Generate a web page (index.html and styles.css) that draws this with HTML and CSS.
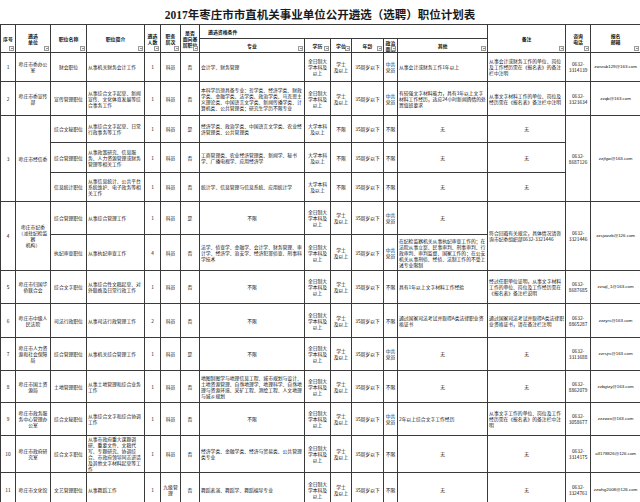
FILE: index.html
```html
<!DOCTYPE html>
<html lang="zh-CN">
<head>
<meta charset="utf-8">
<title>2017年枣庄市市直机关事业单位公开遴选（选聘）职位计划表</title>
<link rel="stylesheet" href="styles.css">
</head>
<body>
<div class="page">
  <div class="title">2017年枣庄市市直机关事业单位公开遴选（选聘）职位计划表</div>
  <table class="plan">
    <colgroup>
      <col style="width:15px"><col style="width:35px"><col style="width:36px"><col style="width:58px">
      <col style="width:16px"><col style="width:20px"><col style="width:19px"><col style="width:105px">
      <col style="width:26px"><col style="width:21px"><col style="width:32px"><col style="width:14px">
      <col style="width:90px"><col style="width:78px"><col style="width:25px"><col style="width:50px">
    </colgroup>
    <thead>
      <tr class="hr1">
        <th rowspan="2">序号<span class="flt"></span></th>
        <th rowspan="2">遴选<br>单位<span class="flt"></span></th>
        <th rowspan="2">职位名称<span class="flt"></span></th>
        <th rowspan="2">职位简介<span class="flt"></span></th>
        <th rowspan="2">遴选<br>人数<span class="flt"></span></th>
        <th rowspan="2">职务<br>层次<span class="flt"></span></th>
        <th rowspan="2">是否<br>面向基<br>层职位<span class="flt"></span></th>
        <th colspan="6" class="lft">遴选资格条件</th>
        <th rowspan="2">备注<span class="flt"></span></th>
        <th rowspan="2">咨询<br>电话<span class="flt"></span></th>
        <th rowspan="2">报名<br>邮箱<span class="flt"></span></th>
      </tr>
      <tr class="hr2">
        <th>专业<span class="flt"></span></th>
        <th>学历<span class="flt"></span></th>
        <th>学位<span class="flt"></span></th>
        <th>年龄<span class="flt"></span></th>
        <th>政治<br>面貌<span class="flt"></span></th>
        <th>其他<span class="flt"></span></th>
      </tr>
    </thead>
    <tbody>
      <tr class="r29">
        <td>1</td><td>枣庄市委办公室</td><td>财会职位</td><td class="lft">从事机关财务会计工作</td>
        <td>1</td><td>科员</td><td>否</td><td class="lft">会计学、财务管理</td>
        <td>全日制大学本科及以上</td><td>学士<br>及以上</td><td>35周岁以下</td><td>中共党员</td>
        <td class="lft">从事会计或财务工作1年以上</td>
        <td class="lft">从事会计或财务工作的单位、岗位及工作经历需在《报名表》的备注栏中注明</td>
        <td>0632-<br>3314139</td><td class="mail">zwsrab129@163.com</td>
      </tr>
      <tr class="r34">
        <td>2</td><td>枣庄市委宣传部</td><td>宣传管理职位</td><td class="lft">从事综合文字起草、新闻宣传、文化体育发展等综合事务工作</td>
        <td>1</td><td>科员</td><td>否</td>
        <td class="lft">本科学历须具备专业：哲学类、经济学类、财政学类、金融学类、法学类、政治学类、马克思主义理论类、中国语言文学类、新闻传播学类、计算机类、公共管理类；研究生学历不限专业</td>
        <td>全日制大学本科及以上</td><td>学士<br>及以上</td><td>35周岁以下</td><td>中共党员</td>
        <td class="lft">有较强文字材料能力，具有3年以上文字材料工作经历，适应24小时新闻舆情的处置值班要求</td>
        <td class="lft">从事文字材料工作的单位、岗位及经历需在《报名表》备注栏中注明</td>
        <td>0632-<br>3323634</td><td class="mail">zzqb@163.com</td>
      </tr>
      <tr class="r27">
        <td rowspan="3">3</td><td rowspan="3">枣庄市经信委</td><td>综合文秘职位</td><td class="lft">从事综合文字起草、日常行政事务等工作</td>
        <td>1</td><td>科员</td><td>是</td>
        <td class="lft">经济学类、政治学类、中国语言文学类、农业经济管理类、公共管理类</td>
        <td>大学本科及以上</td><td>不限</td><td>35周岁以下</td><td>不限</td>
        <td>无</td><td>无</td>
        <td rowspan="3">0632-<br>8687126</td><td rowspan="3" class="mail">zzjfgw@163.com</td>
      </tr>
      <tr class="r30">
        <td>综合管理职位</td><td class="lft">从事政策研究、信息服务、人力资源管理或财务管理等相关工作</td>
        <td>1</td><td>科员</td><td>否</td>
        <td class="lft">工商管理类、农业经济管理类、新闻学、秘书学、广播电视学、应用经济学</td>
        <td>大学本科及以上</td><td>不限</td><td>35周岁以下</td><td>不限</td>
        <td>无</td><td>无</td>
      </tr>
      <tr class="r29">
        <td>信息统计职位</td><td class="lft">从事信息统计、公共平台系统维护、电子政务等相关工作</td>
        <td>1</td><td>科员</td><td>否</td>
        <td class="lft">统计学、信息管理与信息系统、应用统计学</td>
        <td>大学本科及以上</td><td>不限</td><td>35周岁以下</td><td>不限</td>
        <td>无</td><td>无</td>
      </tr>
      <tr class="r33">
        <td rowspan="2">4</td><td rowspan="2">枣庄市纪委<br>（派驻纪检监察<br>机构）</td><td>综合管理职位</td><td class="lft">从事综合管理工作</td>
        <td>1</td><td>科员</td><td>是</td>
        <td>不限</td>
        <td>全日制大学本科及以上</td><td>学士<br>及以上</td><td>35周岁以下</td><td>中共党员</td>
        <td>无</td>
        <td rowspan="2" class="lft">符合回避有关规定，具体情况请咨询市纪委组织部0632-3321446</td>
        <td rowspan="2">0632-<br>3321446</td><td rowspan="2" class="mail">zzsjwzzb@126.com</td>
      </tr>
      <tr class="r36">
        <td>执纪审查职位</td><td class="lft">从事执纪审查工作</td>
        <td>4</td><td>科员</td><td>否</td>
        <td class="lft">法学、侦查学、金融学、会计学、财务管理、审计学、经济学、治安学、经济犯罪侦查、刑事科学技术</td>
        <td>全日制大学本科及以上</td><td>学士<br>及以上</td><td>35周岁以下</td><td>中共党员</td>
        <td class="lft">在纪检监察机关从事执纪审查工作的；在法院从事立案、民事审判、刑事审判、行政审判、审判监督、国家工作的；在公安机关从事刑侦、经侦、法制工作的不受上述专业限制</td>
      </tr>
      <tr class="r33">
        <td>5</td><td>枣庄市归国华侨联合会</td><td>综合文字职位</td><td class="lft">从事综合性文稿起草、对外联络及日常行政工作</td>
        <td>1</td><td>科员</td><td>否</td>
        <td>不限</td>
        <td>全日制大学本科及以上</td><td>学士<br>及以上</td><td>35周岁以下</td><td>不限</td>
        <td class="lft">具有1年以上文字材料工作经验</td>
        <td class="lft">经过任职单位证明，从事文字材料工作的单位、岗位及工作经历需在《报名表》备注栏说明</td>
        <td>0632-<br>8687685</td><td class="mail">zzsql_1@163.com</td>
      </tr>
      <tr class="r34">
        <td>6</td><td>枣庄市中级人民法院</td><td>司法行政职位</td><td class="lft">从事司法行政管理工作</td>
        <td>2</td><td>科员</td><td>否</td>
        <td>不限</td>
        <td>全日制大学本科及以上</td><td>学士<br>及以上</td><td>35周岁以下</td><td>不限</td>
        <td class="lft">通过国家司法考试并取得A类法律职业资格证书</td>
        <td class="lft">通过国家司法考试并取得A类法律职业资格证书，请在备注栏注明</td>
        <td>0632-<br>8865287</td><td class="mail">zzzyrs@163.com</td>
      </tr>
      <tr class="r33">
        <td>7</td><td>枣庄市人力资源和社会保障局</td><td>综合管理职位</td><td class="lft">从事机关综合管理工作</td>
        <td>1</td><td>科员</td><td>是</td>
        <td>不限</td>
        <td>全日制大学本科及以上</td><td>学士<br>及以上</td><td>35周岁以下</td><td>中共党员</td>
        <td>无</td><td>无</td>
        <td>0632-<br>3313688</td><td class="mail">zzrsjrs@163.com</td>
      </tr>
      <tr class="r32">
        <td>8</td><td>枣庄市国土资源局</td><td>土地管理职位</td><td class="lft">从事土地管理和综合业务工作</td>
        <td>1</td><td>科员</td><td>否</td>
        <td class="lft">地图制图学与地理信息工程、城市规划与设计、土地资源管理、自然地理学、地理科学、自然地理与资源环境、采矿工程、测绘工程、人文地理与城乡规划</td>
        <td>全日制大学本科及以上</td><td>学士<br>及以上</td><td>35周岁以下</td><td>不限</td>
        <td>无</td><td>无</td>
        <td>0632-<br>8862079</td><td class="mail">zzbgtzy@163.com</td>
      </tr>
      <tr class="r33">
        <td>9</td><td>枣庄市政务服务中心管理办公室</td><td>综合文秘职位</td><td class="lft">从事综合文字和综合协调工作</td>
        <td>1</td><td>科员</td><td>否</td>
        <td>不限</td>
        <td>全日制大学本科及以上</td><td>学士<br>及以上</td><td>35周岁以下</td><td>中共党员</td>
        <td class="lft">2年以上综合文字工作经历</td>
        <td class="lft">从事文字工作的单位、岗位及工作经历需在《报名表》的备注栏中注明</td>
        <td>0632-<br>3058677</td><td class="mail">zzzwzx@163.com</td>
      </tr>
      <tr class="r33">
        <td>10</td><td>枣庄市政府研究室</td><td>综合文字职位</td><td class="lft">从事市政府重大课题调研、重要文件、文稿代写、专题研究、协调综合、市政府领导同志讲话及其他文字材料起草等工作</td>
        <td>1</td><td>科员</td><td>否</td>
        <td class="lft">经济学类、金融学类、经济与贸易类、公共管理类专业</td>
        <td>全日制大学本科及以上</td><td>学士<br>及以上</td><td>35周岁以下</td><td>不限</td>
        <td>无</td><td>无</td>
        <td>0632-<br>3314175</td><td class="mail">a3178826@126.com</td>
      </tr>
      <tr class="r34">
        <td>11</td><td>枣庄市文化馆</td><td>文艺管理职位</td><td class="lft">从事舞蹈工作</td>
        <td>1</td><td>九级管理</td><td>否</td>
        <td class="lft">舞蹈表演、舞蹈学、舞蹈编导专业</td>
        <td>全日制大学本科及以上</td><td>学士<br>及以上</td><td>35周岁以下</td><td>不限</td>
        <td>无</td><td>无</td>
        <td>0632-<br>3324761</td><td class="mail">zzwhg2008@126.com</td>
      </tr>
    </tbody>
  </table>
</div>
</body>
</html>
```
FILE: styles.css
```css
html, body {
  margin: 0;
  padding: 0;
  background: #ffffff;
}
body {
  font-family: "Noto Sans CJK SC", "Noto Sans", sans-serif;
  color: #111;
}
.page {
  width: 640px;
  overflow: hidden;
}
.title {
  height: 24px;
  display: flex;
  align-items: center;
  justify-content: center;
  font-family: "Liberation Serif", "Noto Sans CJK SC", serif;
  font-weight: bold;
  font-size: 11.5px;
  color: #1a1a1a;
  box-sizing: border-box;
  padding-top: 3px;
}
.plan {
  width: 640px;
  border-collapse: collapse;
  table-layout: fixed;
  font-size: 4.8px;
  line-height: 6px;
}
.plan th,
.plan td {
  border: 1px solid #3a3a3a;
  padding: 0 1px;
  vertical-align: middle;
  text-align: center;
  position: relative;
  overflow: hidden;
  word-break: break-all;
  font-weight: normal;
}
.plan th {
  font-weight: bold;
  font-size: 4.9px;
}
.plan .lft {
  text-align: left;
}
.plan th.lft {
  padding-left: 8px;
}
.hr1 { height: 14px; }
.hr2 { height: 14px; }
.r27 { height: 27px; }
.r29 { height: 29px; }
.r30 { height: 30px; }
.r32 { height: 32px; }
.r33 { height: 33px; }
.r34 { height: 34px; }
.r36 { height: 36px; }
.mail {
  font-family: "Liberation Sans", sans-serif;
  font-size: 4.4px;
}
.flt {
  position: absolute;
  right: 1px;
  bottom: 1px;
  width: 5px;
  height: 5px;
  border: 1px solid #9a9a9a;
  background: #f2f2f2;
  box-sizing: border-box;
}
.flt::after {
  content: "";
  position: absolute;
  left: 0.5px;
  top: 1px;
  border-left: 1.5px solid transparent;
  border-right: 1.5px solid transparent;
  border-top: 1.5px solid #333;
}
```
